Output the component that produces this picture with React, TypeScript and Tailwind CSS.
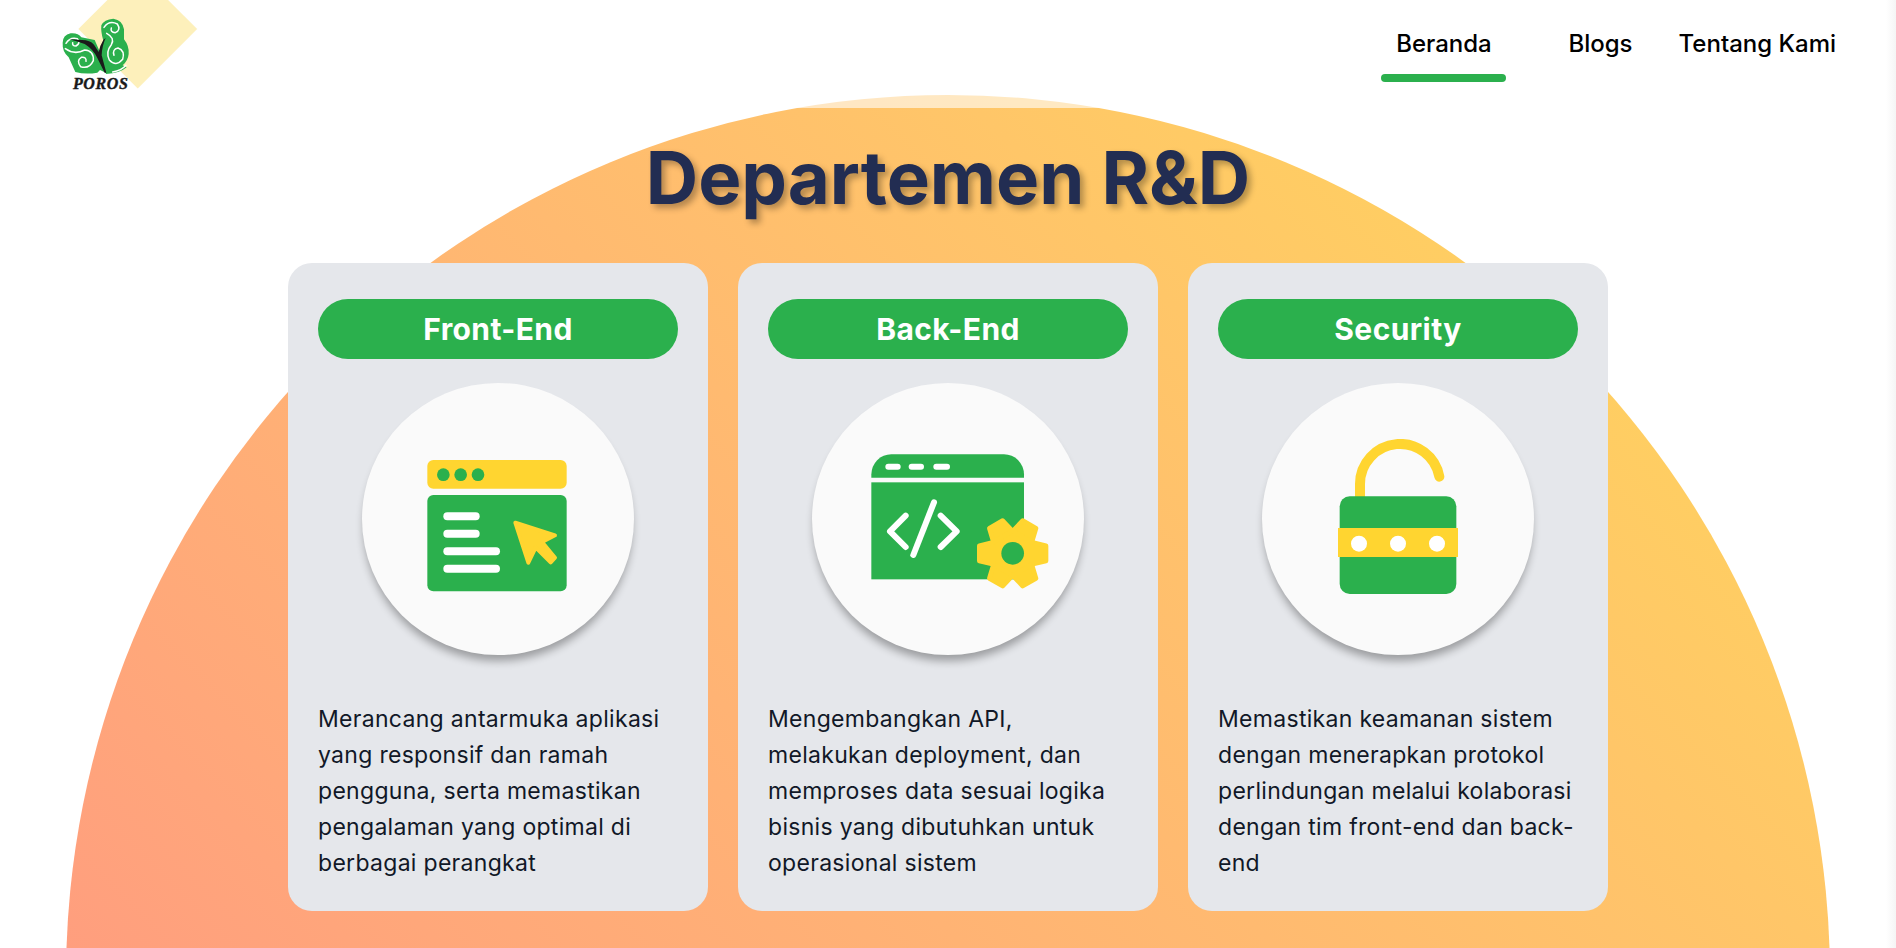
const font = "font-['Inter','Noto_Sans',sans-serif]";

const cards = [
  {
    title: "Front-End",
    icon: <FrontEndIcon />,
    text: "Merancang antarmuka aplikasi yang responsif dan ramah pengguna, serta memastikan pengalaman yang optimal di berbagai perangkat",
  },
  {
    title: "Back-End",
    icon: <BackEndIcon />,
    text: "Mengembangkan API, melakukan deployment, dan memproses data sesuai logika bisnis yang dibutuhkan untuk operasional sistem",
  },
  {
    title: "Security",
    icon: <SecurityIcon />,
    text: "Memastikan keamanan sistem dengan menerapkan protokol perlindungan melalui kolaborasi dengan tim front-end dan back-end",
  },
];

// all three icons share one 480 unit frame, centred on the white circle
function FrontEndIcon() {
  return (
    <svg viewBox="234 207 480 480" className="h-[160px] w-[160px]">
      <rect x="262" y="270" width="418" height="86" rx="18" fill="#ffd530" />
      <circle cx="310" cy="314" r="19" fill="#2bb04d" />
      <circle cx="362" cy="314" r="19" fill="#2bb04d" />
      <circle cx="414" cy="314" r="19" fill="#2bb04d" />
      <rect x="262" y="375" width="418" height="289" rx="18" fill="#2bb04d" />
      <rect x="310" y="427" width="109" height="24" rx="12" fill="#fff" />
      <rect x="310" y="479" width="109" height="24" rx="12" fill="#fff" />
      <rect x="310" y="532" width="170" height="24" rx="12" fill="#fff" />
      <rect x="310" y="584" width="170" height="24" rx="12" fill="#fff" />
      <path
        d="M526 458 L645 496 L606 516 L645 563 L632 577 L587 532 L565 578 Z"
        fill="#ffd530"
        stroke="#ffd530"
        strokeWidth="12"
        strokeLinejoin="round"
      />
    </svg>
  );
}

function BackEndIcon() {
  return (
    <svg viewBox="234 207 480 480" className="h-[160px] w-[160px] overflow-visible">
      <path d="M244 323 V313 A60 60 0 0 1 304 253 H642 A60 60 0 0 1 702 313 V323 Z" fill="#2bb04d" />
      <rect x="286" y="281" width="46" height="18" rx="9" fill="#fff" />
      <rect x="356" y="281" width="46" height="18" rx="9" fill="#fff" />
      <rect x="430" y="281" width="50" height="18" rx="9" fill="#fff" />
      <rect x="244" y="337" width="458" height="291" fill="#2bb04d" />
      <g fill="none" stroke="#fff" strokeWidth="18" strokeLinecap="round" strokeLinejoin="round">
        <path d="M347 437 L300 484 L347 531" />
        <path d="M452 437 L500 484 L452 531" />
        <path d="M432 397 L370 555" />
      </g>
      <g transform="translate(668 550)">
        <circle r="76" fill="#ffd530" />
        {[0, 60, 120, 180, 240, 300].map((a) => (
          <path
            key={a}
            transform={`rotate(${a})`}
            d="M58 -33 L100 -23 L100 23 L58 33 Z"
            fill="#ffd530"
            stroke="#ffd530"
            strokeWidth="14"
            strokeLinejoin="round"
          />
        ))}
        <circle r="34" fill="#2bb04d" />
      </g>
    </svg>
  );
}

function SecurityIcon() {
  return (
    <svg viewBox="234 207 480 480" className="h-[160px] w-[160px]">
      <path
        d="M360 390 V342 A120 120 0 0 1 598 320"
        fill="none"
        stroke="#ffd530"
        strokeWidth="30"
        strokeLinecap="round"
      />
      <rect x="299" y="379" width="350" height="293" rx="30" fill="#2bb04d" />
      <rect x="294" y="474" width="360" height="87" fill="#ffd530" />
      <circle cx="357" cy="521" r="24" fill="#fff" />
      <circle cx="474" cy="521" r="24" fill="#fff" />
      <circle cx="591" cy="521" r="24" fill="#fff" />
    </svg>
  );
}

function Logo() {
  return (
    <div className="relative ml-[40px] mt-[10px] h-[90px] w-[110px]">
      {/* pale square behind the butterfly */}
      <div className="absolute left-[56px] top-[-23px] h-[83.5px] w-[83.5px] rotate-45 bg-[#fdf0bb]" />
      <svg viewBox="0 0 330 270" className="absolute inset-0 h-full w-full">
        <path
          d="M68 98 Q68 76 92 70 Q114 68 124 82 L164 90 L186 140 L200 190 L180 180 L172 188 Q136 194 106 186 Q94 160 86 142 Q66 124 68 98 Z"
          fill="#2bb04d"
        />
        <path
          d="M184 46 Q192 28 220 26 Q248 30 252 58 L252 88 Q268 108 266 132 Q264 152 248 166 L260 172 Q240 190 198 192 Q188 150 178 126 L190 92 Q182 66 184 46 Z"
          fill="#2bb04d"
        />
        <g fill="none" stroke="#fff" strokeWidth="4.5" strokeLinecap="round">
          <path d="M78 100 Q90 80 112 86 Q124 98 108 108 Q96 108 98 98" />
          <path d="M76 116 Q104 136 134 120 Q162 122 160 152 Q148 178 122 170 Q108 152 124 142 Q140 140 138 154" />
          <path d="M192 52 Q208 30 232 42 Q244 60 226 68 Q210 66 214 54" />
          <path d="M200 70 Q226 84 214 104 Q196 126 208 150 Q228 172 248 148 Q256 122 234 114 Q216 118 222 136" />
          <path d="M218 186 Q244 182 258 166" />
        </g>
        <path
          d="M88 88 L126 90 Q150 90 162 104 L176 126 Q180 106 190 90 L197 84 Q186 108 185 136 L199 188 L194 188 L172 144 Q160 118 134 102 Q112 94 88 88 Z"
          fill="#1a1a1a"
        />
      </svg>
      <span className="absolute left-[33px] top-[66px] font-['Liberation_Serif',serif] text-[16px] font-bold italic leading-[16px] tracking-[0.6px] text-[#1a1a1a] [-webkit-text-stroke:0.4px_#1a1a1a]">
        POROS
      </span>
    </div>
  );
}

function Card({ title, icon, text }: { title: string; icon: React.ReactNode; text: string }) {
  return (
    <div className="flex h-[648px] w-[420px] flex-col rounded-[24px] bg-[#e5e7eb] px-[30px] pt-[36px]">
      <div className="flex h-[60px] items-center justify-center rounded-full bg-[#2bb04d] text-[30px] font-bold tracking-[0.4px] text-white">
        {title}
      </div>
      <div className="mx-auto mt-[24px] flex h-[272px] w-[272px] items-center justify-center rounded-full bg-[#fafafa] shadow-[0_8px_8px_-2px_rgba(0,0,0,0.32)]">
        {icon}
      </div>
      <p className="mt-[46px] text-[23px] leading-[36px] tracking-[0.3px] text-[#111827]">{text}</p>
    </div>
  );
}

export default function App() {
  return (
    <div className={`relative h-[948px] overflow-hidden bg-white ${font}`}>
      <div className="absolute left-[66px] top-[95px] h-[1764px] w-[1764px] rounded-full bg-linear-to-tr from-[#ff8886] to-[#ffd958]" />
      {/* faint grey fade along the right edge of the window */}
      <div className="absolute inset-y-0 right-0 z-20 w-[10px] bg-linear-to-r from-transparent to-black/[0.04]" />

      <nav className="relative z-10 flex h-[108px] justify-between bg-white/60">
        <Logo />
        <div className="mr-[45px] flex text-[24px] font-medium leading-[36px] text-black">
          <a className="mt-[26px] flex h-[56px] w-[125px] flex-col items-center justify-between">
            Beranda
            <span className="h-[8px] w-full rounded-full bg-[#2bb04d]" />
          </a>
          <a className="ml-[47px] mt-[26px] px-[15px]">Blogs</a>
          <a className="ml-[16px] mt-[26px] px-[15px]">Tentang Kami</a>
        </div>
      </nav>

      <main className="relative z-10">
        <h1 className="mt-[20px] text-center text-[72.5px] font-bold leading-[100px] text-[#222d52] [text-shadow:4px_4px_6px_rgba(0,0,0,0.3)]">
          Departemen R&amp;D
        </h1>
        <div className="mt-[35px] flex justify-center gap-[30px]">
          {cards.map((c) => (
            <Card key={c.title} {...c} />
          ))}
        </div>
      </main>
    </div>
  );
}
